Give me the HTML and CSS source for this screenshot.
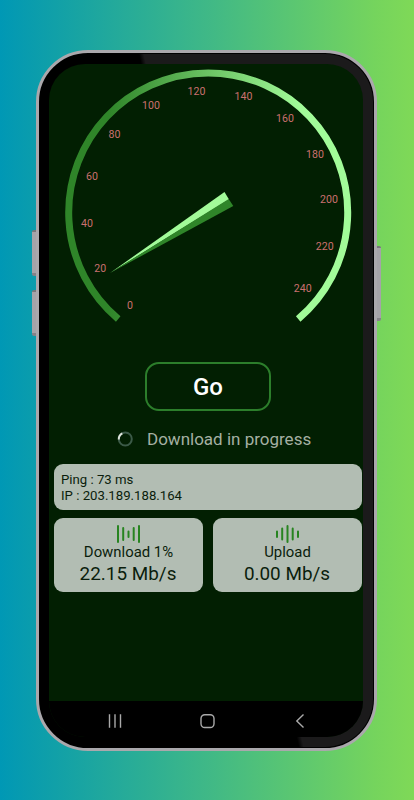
FILE: index.html
```html
<!DOCTYPE html>
<html lang="en">
<head>
    <meta charset="UTF-8">
    <meta name="viewport" content="width=device-width, initial-scale=1.0">
    <title>Speed Test</title>
    <link rel="stylesheet" href="styles.css">
</head>
<body>
<div class="phone">
    <span class="side-button volume-up"></span>
    <span class="side-button volume-down"></span>
    <span class="side-button power"></span>
    <div class="screen">
        <!-- Speed gauge -->
        <svg class="gauge" viewBox="49 64 314 276" width="314" height="276">
            <defs>
                <linearGradient id="arcColor" gradientUnits="userSpaceOnUse" x1="108" y1="0" x2="300" y2="0">
                    <stop offset="0" stop-color="#2f8529"/>
                    <stop offset="1" stop-color="#a2fb99"/>
                </linearGradient>
            </defs>
            <path d="M118.2 319 A139.5 139.5 0 1 1 298.2 319" fill="none" stroke="url(#arcColor)" stroke-width="7"/>
            <path d="M110 273 L224.5 192 L229 199.5 Z" fill="#a2fb99"/>
            <path d="M110 273 L228.7 199 L233.3 206 Z" fill="#2f8529"/>
            <g class="gauge-labels">
                <text x="130" y="309">0</text>
                <text x="100.2" y="272">20</text>
                <text x="87" y="227">40</text>
                <text x="92" y="180">60</text>
                <text x="114.5" y="138">80</text>
                <text x="151" y="108.5">100</text>
                <text x="196.5" y="95">120</text>
                <text x="243.5" y="99.5">140</text>
                <text x="285" y="122">160</text>
                <text x="315" y="158">180</text>
                <text x="329" y="203">200</text>
                <text x="324.7" y="250">220</text>
                <text x="302.8" y="292">240</text>
            </g>
        </svg>

        <button class="go-button" type="button">Go</button>

        <div class="status">
            <svg class="spinner" viewBox="0 0 16 16" width="16" height="16">
                <circle cx="8.3" cy="8" r="6.5" fill="none" stroke="#3c5a48" stroke-width="2"/>
                <path d="M1.8 8.5 A6.5 6.5 0 0 1 5.3 2.3" fill="none" stroke="#dde3dc" stroke-width="2"/>
            </svg>
            <span>Download in progress</span>
        </div>

        <!-- Results -->
        <div class="card info-card">
            <div>Ping : 73 ms</div>
            <div>IP : 203.189.188.164</div>
        </div>
        <div class="results">
            <div class="card result-card">
                <svg class="wave" viewBox="0 0 24 18" width="24" height="18">
                    <path d="M1 1V17M6.2 3V15M11.5 6.5V12M16.7 3V15M22 1V17"/>
                </svg>
                <div class="result-label">Download 1%</div>
                <div class="result-value">22.15 Mb/s</div>
            </div>
            <div class="card result-card">
                <svg class="wave" viewBox="0 0 24 18" width="24" height="18">
                    <path d="M1 6.5V12M6.2 3.5V14.5M11.5 1V17M16.7 3.5V14.5M22 6.5V12"/>
                </svg>
                <div class="result-label">Upload</div>
                <div class="result-value">0.00 Mb/s</div>
            </div>
        </div>

        <!-- Android navigation -->
        <div class="nav-bar">
            <svg viewBox="0 0 16 16" width="16" height="16"><path d="M2.5 1.2V14.8M8 1.2V14.8M13.5 1.2V14.8"/></svg>
            <svg viewBox="0 0 16 16" width="16" height="16"><rect x="1" y="1.7" width="13" height="12.8" rx="3.8"/></svg>
            <svg viewBox="0 0 16 16" width="16" height="16"><path d="M11.5 1.5L4.8 8L11.5 14.5"/></svg>
        </div>
    </div>
</div>
</body>
</html>
```
FILE: styles.css
```css
* {
    box-sizing: border-box;
}

body {
    margin: 0;
    height: 800px;
    padding: 50px 0 0 36px;
    overflow: hidden;
    background: linear-gradient(90deg, #0098b5 0, #0b9dac 36px, #3fb887 206px, #75d45d 375px, #7fd957 414px);
    font-family: Roboto, sans-serif;
}

/* Phone frame */
.phone {
    position: relative;
    width: 341px;
    height: 701px;
    padding: 11px 11px 11px 10px;
    border: 3px solid #aaa8ac;
    border-radius: 52px;
    background: linear-gradient(77deg, #000 52.5%, #1b1a1b 53.5%);
    box-shadow: inset 0 0 0 1px #000;
}

.side-button {
    position: absolute;
    width: 4px;
    background: #a5a3a8;
    border-top: 2px solid #77777b;
    border-bottom: 3px solid #858389;
    border-radius: 2px 0 0 2px;
}

.volume-up {
    left: -7px;
    top: 177px;
    height: 46px;
}

.volume-down {
    left: -7px;
    top: 237px;
    height: 46px;
}

.power {
    right: -7px;
    top: 193px;
    height: 75px;
    border-radius: 0 2px 2px 0;
}

.screen {
    display: flex;
    flex-direction: column;
    width: 314px;
    height: 673px;
    overflow: hidden;
    border-radius: 36px;
    background: #021f02;
}

/* Gauge */
.gauge {
    display: block;
    flex: none;
}

.gauge-labels {
    fill: #ca706f;
    font-size: 10.6px;
    text-anchor: middle;
}

.go-button {
    align-self: center;
    width: 126px;
    height: 49px;
    margin: 22px 0 0 4px;
    padding: 1px 0 0;
    border: 2px solid #2c7e2b;
    border-radius: 14px;
    background: transparent;
    color: #fff;
    font-family: inherit;
    font-size: 24px;
    font-weight: 500;
}

.status {
    display: flex;
    align-items: center;
    gap: 14px;
    height: 20px;
    margin: 18px 0 0 68px;
    color: #a5b0a3;
    font-size: 17px;
    white-space: nowrap;
}

/* Cards */
.card {
    border-radius: 9px;
    background: #b2bdb3;
    color: #0b1d0c;
}

.info-card {
    height: 46px;
    margin: 15px 1px 0 5px;
    padding: 8px 7px 0;
    font-size: 13.2px;
    line-height: 15.5px;
}

.results {
    display: grid;
    grid-template-columns: 1fr 1fr;
    gap: 10px;
    margin: 8px 1px 0 5px;
}

.result-card {
    display: flex;
    flex-direction: column;
    align-items: center;
    height: 74px;
    padding-top: 7px;
}

.wave {
    fill: none;
    stroke: #278420;
    stroke-width: 2;
    stroke-linecap: round;
}

.result-label {
    font-size: 14.9px;
    line-height: 19px;
}

.result-value {
    margin-right: 1px;
    font-size: 18.9px;
    line-height: 23px;
}

/* Navigation bar */
.nav-bar {
    display: flex;
    justify-content: space-between;
    align-items: center;
    height: 36px;
    margin-top: auto;
    padding: 4px 55px 0 58px;
    background: #000;
}

.nav-bar svg {
    fill: none;
    stroke: #aaa;
    stroke-width: 1.4;
}
```
